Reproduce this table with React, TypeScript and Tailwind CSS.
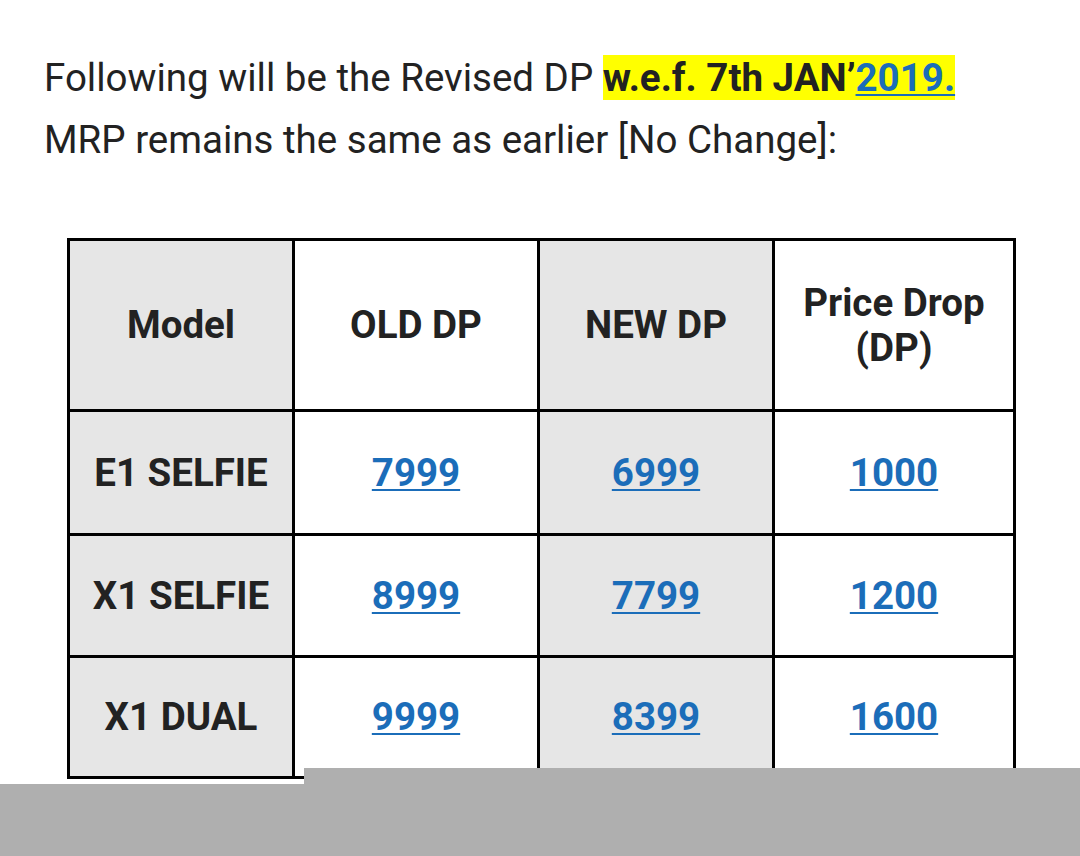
export default function App() {
  const rows = [
    { model: 'E1 SELFIE', oldDp: '7999', newDp: '6999', drop: '1000' },
    { model: 'X1 SELFIE', oldDp: '8999', newDp: '7799', drop: '1200' },
    { model: 'X1 DUAL', oldDp: '9999', newDp: '8399', drop: '1600' },
  ]
  const heights = ['h-[124px]', 'h-[122px]', 'h-[121px]']
  const link = 'text-[#1b6db9] underline decoration-[2px] underline-offset-[3px]'

  return (
    <div className="relative h-[856px] overflow-hidden bg-white text-[#222]" style={{ fontFamily: 'Roboto, "Noto Sans", sans-serif' }}>

      {/* Intro */}
      <div className="pl-[44px] pt-[47px] text-[38.5px] leading-[62px]">
        <p>
          Following will be the Revised DP{' '}
          <span className="bg-[#ffff00] font-bold">
            w.e.f. 7th JAN’<a href="#" className={link}>2019.</a>
          </span>
        </p>
        <p>MRP remains the same as earlier [No Change]:</p>
      </div>

      {/* Table */}
      <table className="ml-[67px] mt-[67px] w-[949px] table-fixed border-collapse border-[3px] border-black text-center text-[38.5px] font-bold">
        <colgroup>
          <col className="w-[225px]" />
          <col className="w-[245px]" />
          <col className="w-[235px]" />
          <col className="w-[241px]" />
        </colgroup>
        <thead>
          <tr className="h-[171px]">
            <th className="border-[3px] border-black bg-[#e6e6e6]">Model</th>
            <th className="border-[3px] border-black">OLD DP</th>
            <th className="border-[3px] border-black bg-[#e6e6e6]">NEW DP</th>
            <th className="border-[3px] border-black leading-[45px]">Price Drop<br />(DP)</th>
          </tr>
        </thead>
        <tbody>
          {rows.map((r, i) => (
            <tr key={r.model} className={heights[i]}>
              <td className="border-[3px] border-black bg-[#e6e6e6]">{r.model}</td>
              <td className="border-[3px] border-black">
                <a href="#" className={link}>{r.oldDp}</a>
              </td>
              <td className="border-[3px] border-black bg-[#e6e6e6]">
                <a href="#" className={link}>{r.newDp}</a>
              </td>
              <td className="border-[3px] border-black">
                <a href="#" className={link}>{r.drop}</a>
              </td>
            </tr>
          ))}
        </tbody>
      </table>

      {/* Bottom sheet */}
      <div className="absolute left-[304px] right-0 top-[768px] bottom-0 bg-[#afafaf]" />
      <div className="absolute left-0 right-0 top-[784px] bottom-0 bg-[#afafaf]" />
    </div>
  )
}
